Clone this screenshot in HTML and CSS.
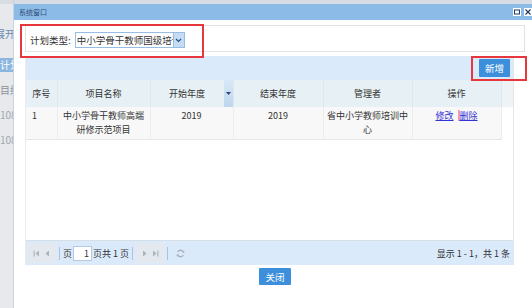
FILE: index.html
```html
<!DOCTYPE html>
<html lang="zh-CN">
<head>
  <meta charset="UTF-8" />
  <meta name="viewport" content="width=device-width, initial-scale=1.0"/>
  <title>系统窗口</title>
  <link rel="stylesheet" href="styles.css">
</head>
<body>
  <!-- page behind the dialog -->
  <div class="backdrop">
    <div class="side-item open">展开</div>
    <div class="side-item active">计划</div>
    <div class="side-item">目编辑</div>
    <div class="side-item num">1080</div>
    <div class="side-item num">1080</div>
  </div>

  <div class="window">
    <div class="titlebar">
      <span class="title">系统窗口</span>
      <span class="tools">
        <svg class="tool" width="8" height="8" viewBox="0 0 8 8"><rect x="0" y="0" width="8" height="8" fill="#fff"/><rect x="1.5" y="2" width="5" height="4" fill="none" stroke="#1f3b66" stroke-width="1"/></svg>
        <svg class="tool" width="8" height="8" viewBox="0 0 8 8"><rect x="0" y="0" width="8" height="8" fill="#fff"/><path d="M1.5 1.5 L6.5 6.5 M6.5 1.5 L1.5 6.5" stroke="#1f3b66" stroke-width="1.2"/></svg>
      </span>
    </div>

    <div class="win-body">
      <div class="search">
        <label>计划类型:</label>
        <div class="combo">
          <span class="combo-text">中小学骨干教师国级培训</span>
          <span class="combo-btn">
            <svg width="7" height="5" viewBox="0 0 7 5"><path d="M1 1 L3.5 3.5 L6 1" fill="none" stroke="#2d4f80" stroke-width="1.2"/></svg>
          </span>
        </div>
      </div>

      <div class="grid">
        <div class="toolbar"><button class="btn">新增</button></div>
        <table>
          <colgroup>
            <col style="width:31px"><col style="width:93px"><col style="width:83px">
            <col style="width:90px"><col style="width:89px"><col style="width:89px"><col>
          </colgroup>
          <thead>
            <tr>
              <th>序号</th>
              <th>项目名称</th>
              <th class="sorted">
                <div class="th-inner">
                  <span class="th-text">开始年度</span>
                  <span class="sort">
                    <svg width="5" height="3" viewBox="0 0 5 3"><path d="M0 0 H5 L2.5 3 Z" fill="#26467a"/></svg>
                  </span>
                </div>
              </th>
              <th>结束年度</th>
              <th>管理者</th>
              <th>操作</th>
              <th class="filler"></th>
            </tr>
          </thead>
          <tbody>
            <tr>
              <td class="left">1</td>
              <td>中小学骨干教师高端研修示范项目</td>
              <td>2019</td>
              <td>2019</td>
              <td class="tight">省中小学教师培训中心</td>
              <td><a href="#">修改</a><span class="cursor"></span><a href="#">删除</a></td>
              <td class="filler"></td>
            </tr>
          </tbody>
        </table>
        <div class="grid-empty"></div>

        <div class="pager">
          <span class="pg-group">
            <svg width="7" height="7" viewBox="0 0 7 7"><rect x="0.5" y="0.5" width="1.2" height="6" fill="#aab3bd"/><path d="M6 0.5 V6.5 L2.5 3.5 Z" fill="#aab3bd"/></svg>
            <svg width="7" height="7" viewBox="0 0 7 7"><path d="M5 0.5 V6.5 L1.5 3.5 Z" fill="#aab3bd"/></svg>
          </span>
          <span class="sep"></span>
          <span class="pg-text">页</span>
          <input class="pg-input" value="1">
          <span class="pg-text">页共 1 页</span>
          <span class="sep"></span>
          <span class="pg-group">
            <svg width="7" height="7" viewBox="0 0 7 7"><path d="M2 0.5 V6.5 L5.5 3.5 Z" fill="#aab3bd"/></svg>
            <svg width="7" height="7" viewBox="0 0 7 7"><path d="M1 0.5 V6.5 L4.5 3.5 Z" fill="#aab3bd"/><rect x="5.3" y="0.5" width="1.2" height="6" fill="#aab3bd"/></svg>
          </span>
          <span class="sep"></span>
          <svg class="refresh" width="9" height="9" viewBox="0 0 9 9"><path d="M7.5 3.5 A3.2 3.2 0 0 0 1.6 3" fill="none" stroke="#aab3bd" stroke-width="1.3"/><path d="M1.5 5.5 A3.2 3.2 0 0 0 7.4 6" fill="none" stroke="#aab3bd" stroke-width="1.3"/><path d="M6 3.6 H8.3 V1.3 Z" fill="#aab3bd"/><path d="M3 5.4 H0.7 V7.7 Z" fill="#aab3bd"/></svg>
          <span class="pg-info">显示 1 - 1，共 1 条</span>
        </div>
      </div>

      <div class="footer"><button class="btn">关闭</button></div>
    </div>
  </div>

  <!-- red annotation boxes -->
  <div class="mark mark-search"></div>
  <div class="mark mark-add"></div>
</body>
</html>
```

FILE: styles.css
```css
* {
  box-sizing: border-box;
  margin: 0;
  padding: 0;
}

body {
  font-family: "Noto Sans CJK SC", "Liberation Sans", sans-serif;
  font-size: 9px;
  color: #333;
  width: 532px;
  height: 308px;
  overflow: hidden;
  display: flex;
  position: relative;
  background: #d8dde3;
}

/* page behind the dialog */
.backdrop {
  width: 14px;
  padding-top: 27px;
  background: linear-gradient(#d8dde3 0, #d8dde3 4px, #e7e9ec 4px);
  border-right: 1px solid #c6d3e6;
  overflow: hidden;
}

.side-item {
  height: 14px;
  line-height: 14px;
  font-size: 10px;
  white-space: nowrap;
  color: #8a9099;
  margin-top: 11px;
}

.side-item.open {
  margin-top: 0;
  margin-left: -5px;
  color: #6a8bb3;
}

.side-item.active {
  margin-top: 17px;
  margin-left: -3px;
  padding-left: 3px;
  background: #8db6df;
  color: #fff;
}

.side-item.num {
  color: #a0a6ad;
}

/* dialog */
.window {
  flex: 1;
  margin-top: 4px;
  background: #fff;
  display: flex;
  flex-direction: column;
}

.titlebar {
  height: 16px;
  background: #8dbbe8;
  display: flex;
  align-items: center;
  justify-content: space-between;
  padding: 0 0 0 5px;
}

.title {
  font-size: 7px;
  color: #2c4a72;
}

.tools {
  display: flex;
  gap: 3px;
}

.tool {
  display: block;
}

.win-body {
  flex: 1;
  padding: 5px 7px 0 11px;
}

.search {
  height: 27px;
  border: 1px solid #e2e2e2;
  display: flex;
  align-items: center;
  padding: 3px 4px 0;
  font-size: 9.5px;
}

.search label {
  margin-right: 4px;
}

.combo {
  width: 110px;
  height: 16px;
  border: 1px solid #95bde6;
  display: flex;
}

.combo-text {
  flex: 1;
  overflow: hidden;
  white-space: nowrap;
  line-height: 14px;
  padding-left: 1px;
}

.combo-btn {
  width: 11px;
  background: #c5dcf4;
  border-left: 1px solid #95bde6;
  display: flex;
  align-items: center;
  justify-content: center;
}

/* grid */
.grid {
  margin: 4px 11px 0 0;
  border-right: 1px solid #e6e6e6;
  border-left: 1px solid #ececec;
}

.toolbar {
  height: 24px;
  background: #dbeafb;
  display: flex;
  justify-content: flex-end;
  align-items: center;
  padding-right: 3px;
}

.btn {
  background: #3d8fdc;
  color: #fff;
  border: none;
  font-family: inherit;
  font-size: 9.5px;
  height: 18px;
  padding: 0 6px;
  border-radius: 1px;
}

table {
  width: 100%;
  border-collapse: collapse;
  table-layout: fixed;
}

th {
  height: 27px;
  background: #e7f0f4;
  font-weight: normal;
  color: #333;
  border-right: 1px solid #e0e8ee;
  padding: 0;
}

th.filler {
  background: #eef3f6;
  border-right: none;
}

.th-inner {
  display: flex;
  height: 27px;
}

.th-text {
  flex: 1;
  display: flex;
  align-items: center;
  justify-content: center;
}

.sort {
  width: 9px;
  background: linear-gradient(#d9e8f7, #bcd5ef);
  display: flex;
  align-items: center;
  justify-content: center;
}

td {
  height: 31px;
  background: #f8f8f8;
  border-right: 1px solid #ececec;
  border-bottom: 1px solid #e6e6e6;
  vertical-align: top;
  text-align: center;
  padding: 2px 4px;
  line-height: 14px;
}

td.tight {
  padding: 2px 1px;
}

td.left {
  text-align: left;
  padding-left: 6px;
}

td.filler {
  background: #fff;
  border: none;
}

td a {
  color: #3434d6;
}

.cursor {
  display: inline-block;
  width: 2px;
  height: 11px;
  background: #f29cae;
  vertical-align: -2px;
  margin-left: 4px;
}

.grid-empty {
  height: 100px;
}

.pager {
  height: 25px;
  background: #dbeafb;
  border-top: 1px solid #d6dee6;
  display: flex;
  align-items: center;
  padding: 0 3px 0 1px;
}

.pg-group {
  width: 30px;
  height: 20px;
  background: #e3e9ef;
  display: flex;
  align-items: center;
  justify-content: space-around;
  padding: 0 4px;
}

.sep {
  width: 1px;
  height: 13px;
  background: #a9c3df;
  margin: 0 2px;
}

.pg-text {
  margin: 0 1px;
}

.pg-input {
  width: 19px;
  height: 15px;
  border: 1px solid #b5c8df;
  background: #fff;
  font-family: inherit;
  font-size: 9px;
  text-align: right;
  padding-right: 2px;
  color: #333;
}

.refresh {
  margin-left: 6px;
}

.pg-info {
  margin-left: auto;
}

.footer {
  text-align: center;
  padding-top: 3px;
}

.footer .btn {
  height: 17px;
}

/* annotations */
.mark {
  position: absolute;
  border: 2px solid #e8363d;
}

.mark-search {
  left: 20px;
  top: 24px;
  width: 184px;
  height: 34px;
}

.mark-add {
  left: 471px;
  top: 56px;
  width: 56px;
  height: 25px;
}
```
